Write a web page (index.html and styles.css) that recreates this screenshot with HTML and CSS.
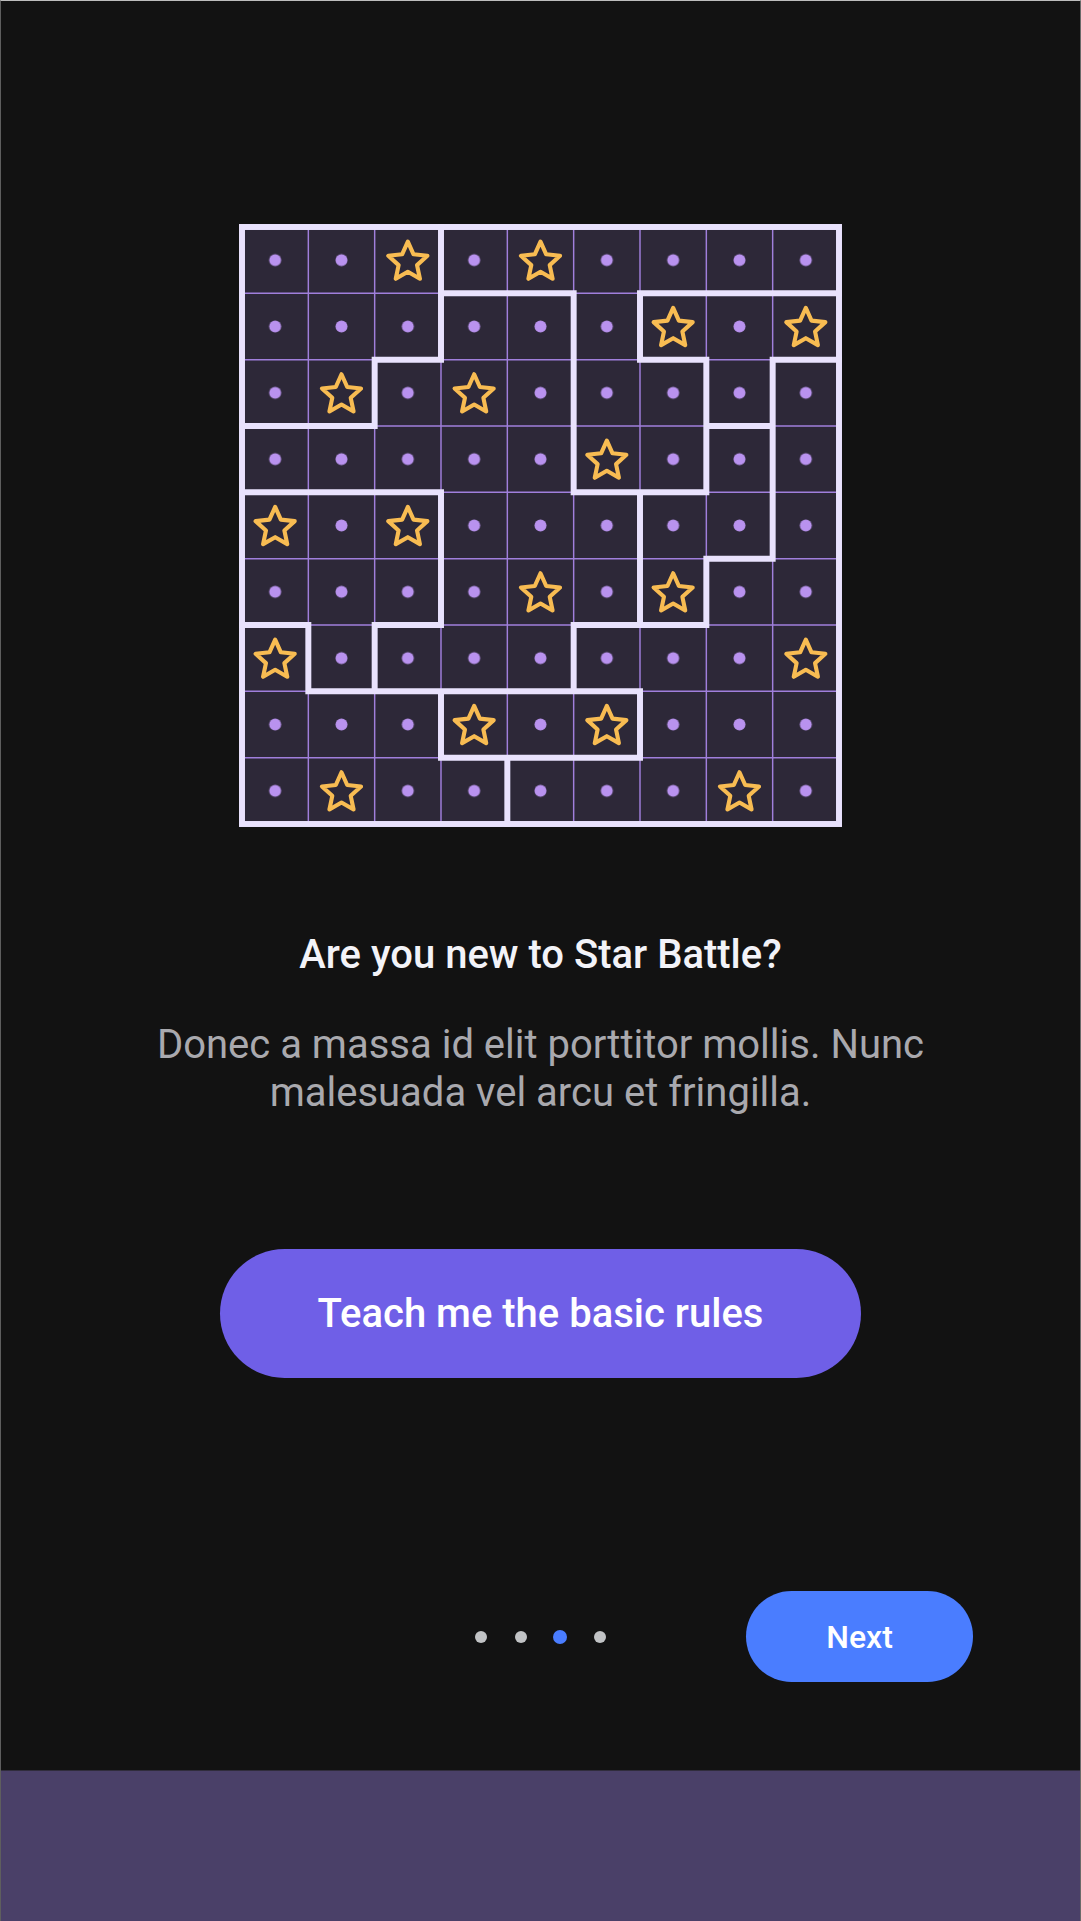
FILE: index.html
```html
<!DOCTYPE html>
<html lang="en">
<head>
<meta charset="utf-8">
<title>Star Battle – Onboarding</title>
<link rel="stylesheet" href="styles.css">
</head>
<body>
<div class="app">
  <main class="screen">
    <div class="board-wrap">
      <svg class="board" width="603" height="603" viewBox="0 0 603 603" aria-label="Star Battle example puzzle">
        <defs>
          <pattern id="dot" width="1" height="1" patternUnits="userSpaceOnUse">
            <circle cx="0.5" cy="0.5" r="0.09" fill="#b992ef"/>
          </pattern>
          <path id="star" d="M0 -0.31 L0.0858 -0.1181 L0.2948 -0.0958 L0.1389 0.0451 L0.1822 0.2508 L0 0.146 L-0.1822 0.2508 L-0.1389 0.0451 L-0.2948 -0.0958 L-0.0858 -0.1181 Z"/>
        </defs>
        <g transform="translate(3 3) scale(66.3333)">
          <rect class="cells" width="9" height="9"/>
          <rect width="9" height="9" fill="url(#dot)"/>
          <path class="thin" d="M1 0V9M2 0V9M3 0V9M4 0V9M5 0V9M6 0V9M7 0V9M8 0V9M0 1H9M0 2H9M0 3H9M0 4H9M0 5H9M0 6H9M0 7H9M0 8H9"/>
          <g class="stars">
            <use href="#star" x="2.5" y="0.53"/>
            <use href="#star" x="4.5" y="0.53"/>
            <use href="#star" x="6.5" y="1.53"/>
            <use href="#star" x="8.5" y="1.53"/>
            <use href="#star" x="1.5" y="2.53"/>
            <use href="#star" x="3.5" y="2.53"/>
            <use href="#star" x="5.5" y="3.53"/>
            <use href="#star" x="0.5" y="4.53"/>
            <use href="#star" x="2.5" y="4.53"/>
            <use href="#star" x="4.5" y="5.53"/>
            <use href="#star" x="6.5" y="5.53"/>
            <use href="#star" x="0.5" y="6.53"/>
            <use href="#star" x="8.5" y="6.53"/>
            <use href="#star" x="3.5" y="7.53"/>
            <use href="#star" x="5.5" y="7.53"/>
            <use href="#star" x="1.5" y="8.53"/>
            <use href="#star" x="7.5" y="8.53"/>
          </g>
          <path class="thick" d="M3 0V2M2 2V3M5 1V4M6 1V2M7 2V4M8 2V5M3 4V6M6 4V6M7 5V6M1 6V7M2 6V7M5 6V7M3 7V8M6 7V8M4 8V9M3 1H5M6 1H9M2 2H3M6 2H7M8 2H9M0 3H2M7 3H8M0 4H3M5 4H7M7 5H8M0 6H1M2 6H3M5 6H7M1 7H6M3 8H6"/>
          <rect class="thick" width="9" height="9"/>
        </g>
      </svg>
    </div>

    <h1 class="title">Are you new to Star Battle?</h1>
    <p class="lead">Donec a massa id elit porttitor mollis. Nunc malesuada vel arcu et fringilla.</p>

    <button class="cta" type="button">Teach me the basic rules</button>

    <footer class="pager">
      <div class="dots">
        <span class="dot"></span>
        <span class="dot"></span>
        <span class="dot dot-active"></span>
        <span class="dot"></span>
      </div>
      <button class="next" type="button">Next</button>
    </footer>
  </main>
  <div class="navbar"></div>
</div>
</body>
</html>
```

FILE: styles.css
```css
* { box-sizing: border-box; }

html, body {
  margin: 0;
  padding: 0;
  background: #121212;
}

body {
  font-family: Roboto, "Noto Sans", "Liberation Sans", sans-serif;
}

.app {
  width: 1081px;
  height: 1921px;
  display: flex;
  flex-direction: column;
  border-top: 1px solid #bdbdbd;
  border-left: 1px solid #5e5e5e;
  border-right: 1px solid #6a6a6a;
}

.screen {
  flex: 0 0 1769px;
  display: flex;
  flex-direction: column;
  align-items: center;
}

.board-wrap {
  margin-top: 223px;
  width: 603px;
  height: 603px;
}

.board { display: block; }

.cells { fill: #2d2838; }

.thin {
  fill: none;
  stroke: #a07fdc;
  stroke-width: 0.022;
}

.stars {
  fill: #2d2838;
  stroke: #f8bc52;
  stroke-width: 0.062;
  stroke-linejoin: round;
}

.thick {
  fill: none;
  stroke: #e9e2fd;
  stroke-width: 0.09;
  stroke-linecap: square;
}

.title {
  margin: 107px 0 0;
  font-size: 40px;
  line-height: 42px;
  font-weight: 500;
  color: #f3f3f8;
  text-align: center;
}

.lead {
  margin: 45px 0 0;
  width: 820px;
  font-size: 40px;
  line-height: 48px;
  font-weight: 400;
  color: #a9a9ae;
  text-align: center;
}

.cta {
  margin-top: 132px;
  width: 641px;
  height: 129px;
  border: none;
  border-radius: 65px;
  background: #6f5fe7;
  color: #ffffff;
  font-family: inherit;
  font-size: 40px;
  font-weight: 500;
  padding: 0;
}

.pager {
  margin-top: 213px;
  width: 100%;
  display: grid;
  grid-template-columns: 1fr auto 1fr;
  align-items: center;
}

.dots {
  grid-column: 2;
  display: flex;
  align-items: center;
}

.dot {
  width: 39.5px;
  height: 14px;
  display: flex;
  justify-content: center;
  align-items: center;
}

.dot::before {
  content: "";
  width: 12px;
  height: 12px;
  border-radius: 50%;
  background: #c1c3c5;
}

.dot-active::before {
  width: 14px;
  height: 14px;
  background: #4a7dff;
}

.next {
  grid-column: 3;
  justify-self: end;
  margin-right: 107px;
  width: 227px;
  height: 91px;
  border: none;
  border-radius: 46px;
  background: #4a7dff;
  color: #ffffff;
  font-family: inherit;
  font-size: 32px;
  font-weight: 500;
  padding: 0;
}

.navbar {
  flex: 1;
  background: #4a4068;
  border-top: 1px solid #302c3c;
}
```
